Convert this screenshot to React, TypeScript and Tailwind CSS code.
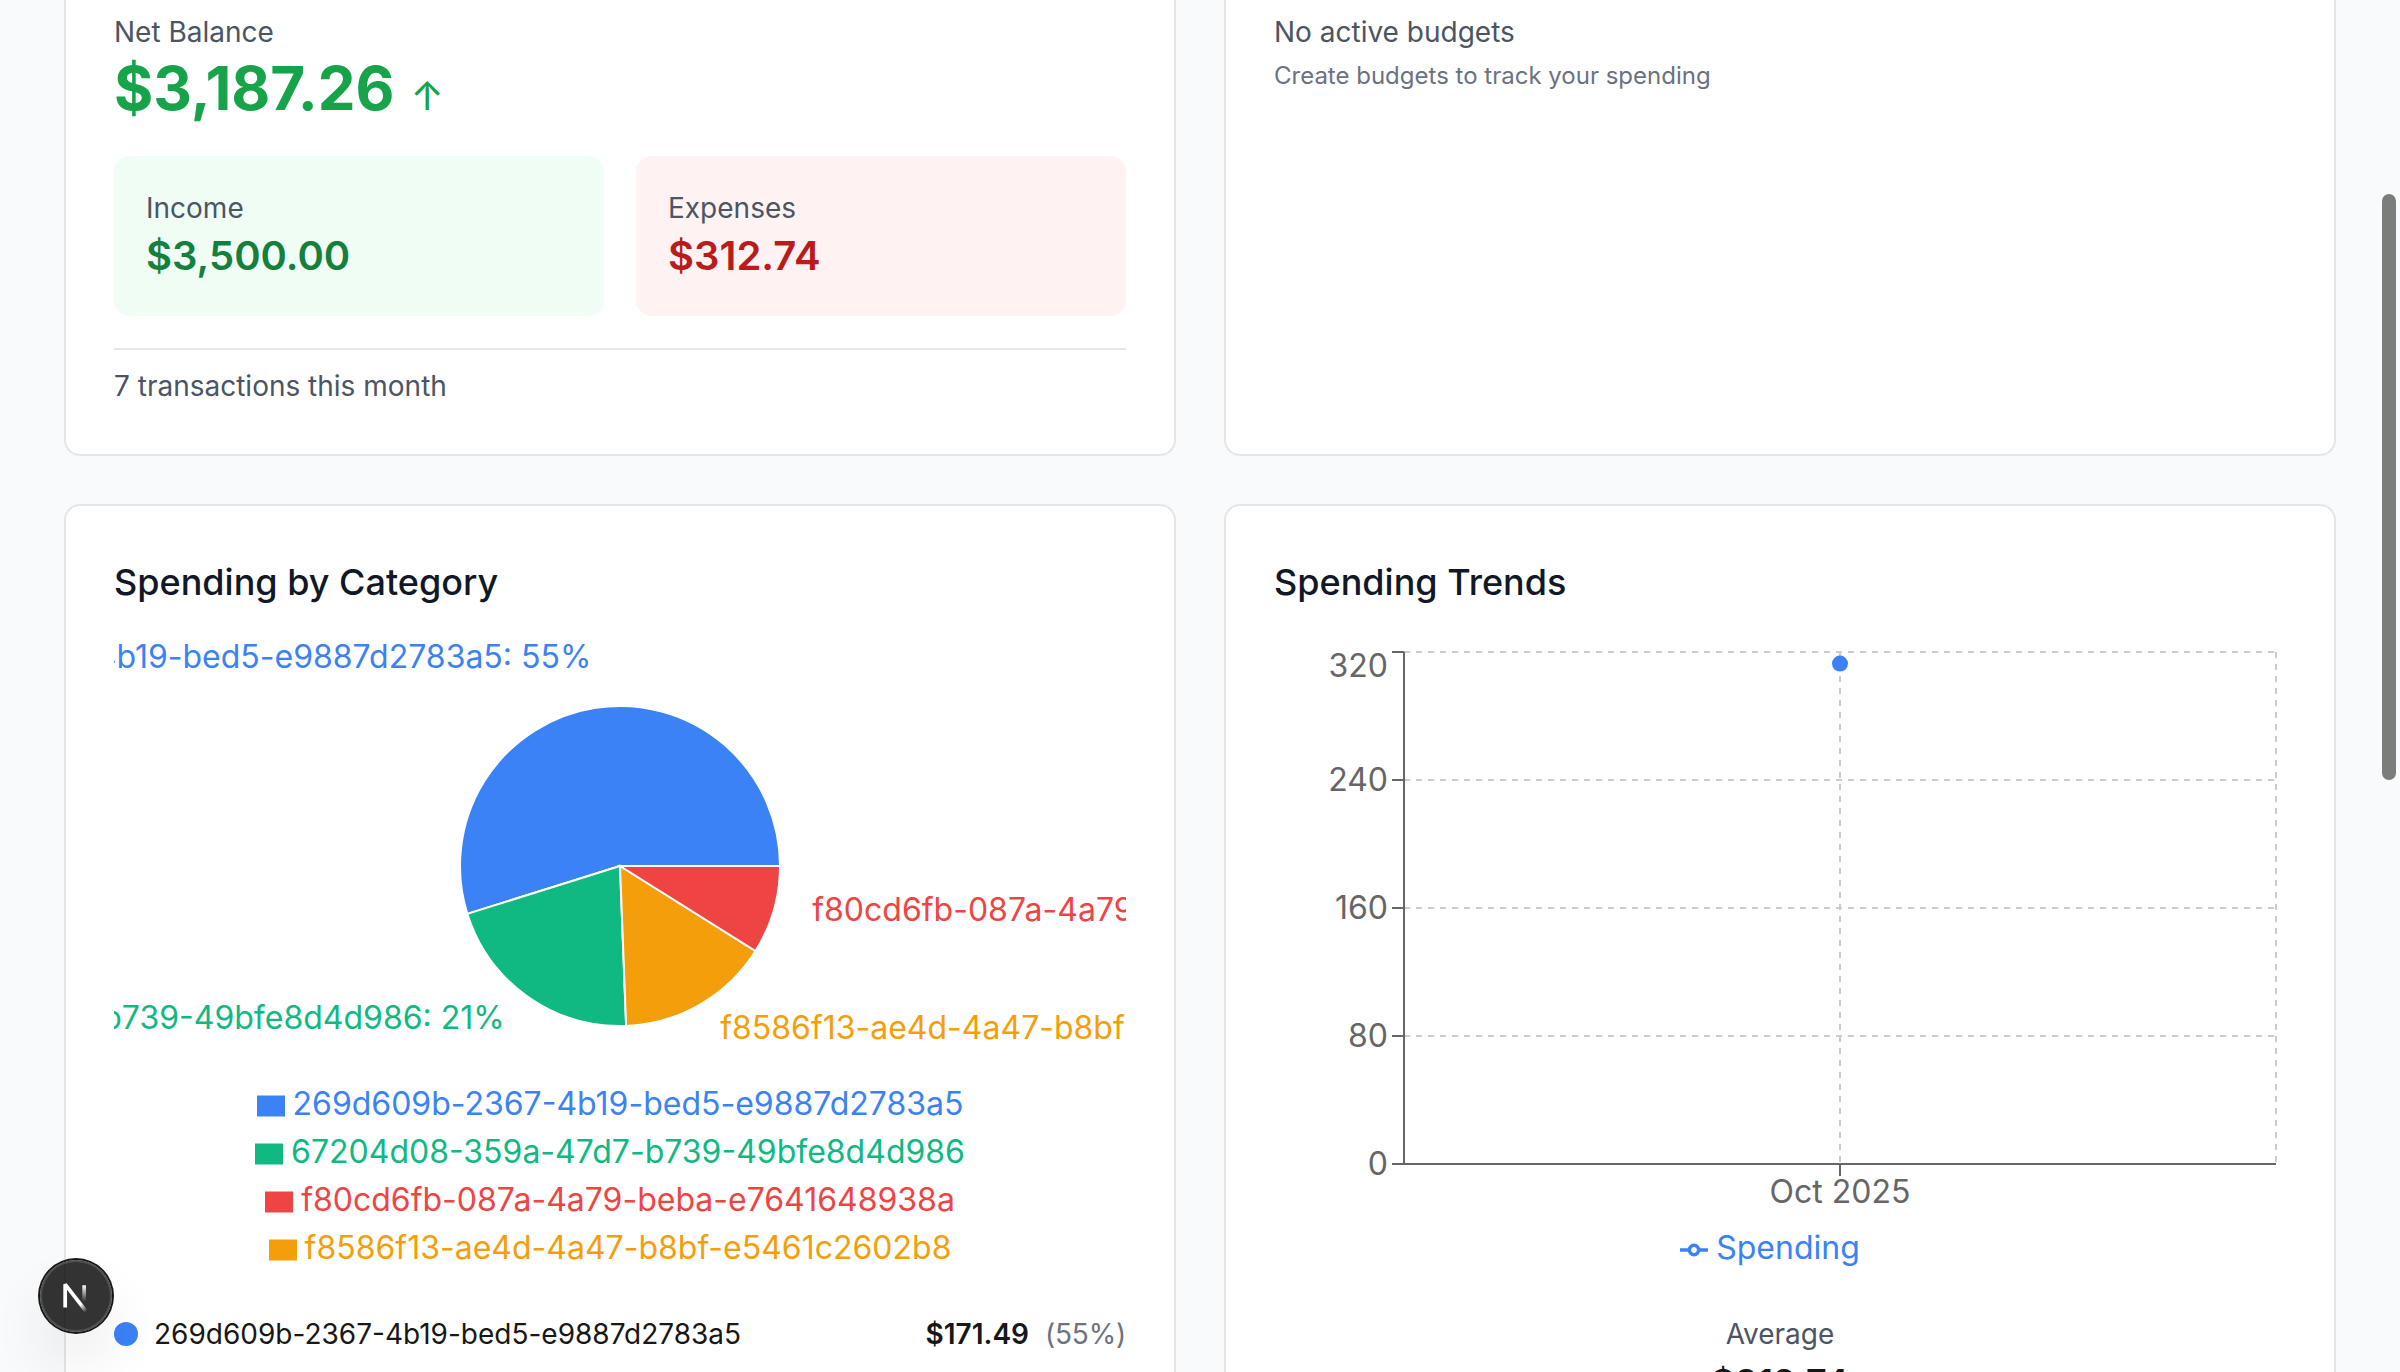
import type { ReactNode } from "react";

type Slice = { id: string; color: string; start: number; end: number; percent: number; dx?: number };

const SLICES: Slice[] = [
  { id: "269d609b-2367-4b19-bed5-e9887d2783a5", color: "#3b82f6", start: 0, end: 197.4, percent: 55, dx: 1.6 },
  { id: "67204d08-359a-47d7-b739-49bfe8d4d986", color: "#10b981", start: 197.4, end: 272.2, percent: 21 },
  { id: "f8586f13-ae4d-4a47-b8bf-e5461c2602b8", color: "#f59e0b", start: 272.2, end: 327.9, percent: 15 },
  { id: "f80cd6fb-087a-4a79-beba-e7641648938a", color: "#ef4444", start: 327.9, end: 360, percent: 9 },
];

const LEGEND = [SLICES[0], SLICES[1], SLICES[3], SLICES[2]];

const CX = 506;
const CY = 224;
const R = 160;

function polar(radius: number, angle: number) {
  const a = (-angle * Math.PI) / 180;
  return { x: CX + radius * Math.cos(a), y: CY + radius * Math.sin(a) };
}

function slicePath({ start, end }: Slice) {
  const a = polar(R, start);
  const b = polar(R, end);
  const large = end - start > 180 ? 1 : 0;
  return `M${CX},${CY} L${a.x},${a.y} A${R},${R} 0 ${large} 0 ${b.x},${b.y} Z`;
}

function PieChart() {
  return (
    <svg className="block h-[438px] w-full overflow-hidden" viewBox="0 0 1012 438">
      {SLICES.map((s) => (
        <path key={s.id} d={slicePath(s)} fill={s.color} stroke="#fff" strokeWidth={2} />
      ))}
      {SLICES.map((s) => {
        const p = polar(R + 40, (s.start + s.end) / 2);
        return (
          <text
            key={s.id}
            x={p.x + (s.dx ?? 0)}
            y={p.y}
            fontSize={32}
            fill={s.color}
            textAnchor={p.x > CX ? "start" : "end"}
          >
            {`${s.id}: ${s.percent}%`}
          </text>
        );
      })}
    </svg>
  );
}

const TICKS = [
  { label: "320", y: 10, textY: 34.6 },
  { label: "240", y: 138, textY: 149.4 },
  { label: "160", y: 266, textY: 277.4 },
  { label: "80", y: 394, textY: 405.4 },
  { label: "0", y: 522, textY: 533.4 },
];

function TrendChart() {
  return (
    <svg className="block h-[582px] w-full overflow-hidden" viewBox="0 0 1012 582">
      <g stroke="#ccc" strokeWidth={2} strokeDasharray="6 6">
        {TICKS.map((t) => (
          <line key={t.label} x1={130} x2={1002} y1={t.y} y2={t.y} />
        ))}
        {[130, 566, 1002].map((x) => (
          <line key={x} x1={x} x2={x} y1={10} y2={522} />
        ))}
      </g>
      <g stroke="#666" strokeWidth={2}>
        <line x1={130} x2={130} y1={10} y2={522} />
        <line x1={130} x2={1002} y1={522} y2={522} />
        <line x1={566} x2={566} y1={522} y2={534} />
        {TICKS.map((t) => (
          <line key={t.label} x1={118} x2={130} y1={t.y} y2={t.y} />
        ))}
      </g>
      <g fill="#666" fontSize={32}>
        {TICKS.map((t) => (
          <text key={t.label} x={114} y={t.textY} textAnchor="end">
            {t.label}
          </text>
        ))}
        <text x={566} y={560.7} textAnchor="middle">
          Oct 2025
        </text>
      </g>
      <circle cx={566} cy={21.6} r={8} fill="#3b82f6" />
    </svg>
  );
}

function Card({ className, children }: { className: string; children: ReactNode }) {
  return <section className={`border-2 border-[#e5e5e5] bg-white px-12 ${className}`}>{children}</section>;
}

function DevBadge() {
  return (
    <div className="absolute top-[1260px] left-10 size-18 rounded-full bg-black/80 shadow-[0_0_0_2px_#171717,inset_0_0_0_2px_rgba(255,255,255,0.14),0_32px_64px_-16px_rgba(0,0,0,0.24)]">
      <svg className="absolute inset-0 size-18" viewBox="0 0 72 72" fill="none">
        <defs>
          <linearGradient id="diag" x1="9.95" y1="11.13" x2="15.33" y2="16.4" gradientUnits="userSpaceOnUse">
            <stop stopColor="#fff" />
            <stop offset="0.604" stopColor="#fff" stopOpacity="0" />
            <stop offset="1" stopColor="#fff" stopOpacity="0" />
          </linearGradient>
          <linearGradient id="stem" x1="11.82" y1="1.4" x2="11.79" y2="9.63" gradientUnits="userSpaceOnUse">
            <stop stopColor="#fff" />
            <stop offset="1" stopColor="#fff" stopOpacity="0" />
          </linearGradient>
        </defs>
        <g transform="translate(20.5 22.3) scale(2)" strokeWidth={1.86}>
          <path d="M13.3 15.2L2.34 1V12.6" stroke="url(#diag)" strokeLinejoin="bevel" />
          <path d="M11.825 1.5V13.1" stroke="url(#stem)" />
        </g>
      </svg>
    </div>
  );
}

export default function App() {
  return (
    <div className="relative h-[1372px] w-[2400px] overflow-hidden bg-[#f9fafb] px-16 font-['Inter',sans-serif] text-[28px] leading-10 text-[#171717] antialiased">
      <div className="grid grid-cols-2 gap-12">
        <Card className="h-[456px] rounded-b-2xl border-t-0 pt-3">
          <p className="text-[#4b5563]">Net Balance</p>
          <p className="flex items-baseline text-[60px] leading-[72px] font-bold text-[#16a34a]">
            $3,187.26
            <span className="ml-4 text-[40px] leading-[56px] font-normal">↑</span>
          </p>
          <div className="mt-8 grid grid-cols-2 gap-8">
            <div className="rounded-2xl bg-[#f0fdf4] p-8">
              <p className="text-[#4b5563]">Income</p>
              <p className="text-[40px] leading-14 font-semibold text-[#15803d]">$3,500.00</p>
            </div>
            <div className="rounded-2xl bg-[#fef2f2] p-8">
              <p className="text-[#4b5563]">Expenses</p>
              <p className="text-[40px] leading-14 font-semibold text-[#b91c1c]">$312.74</p>
            </div>
          </div>
          <p className="mt-8 border-t-2 border-[#e5e7eb] pt-4 text-[#4b5563]">7 transactions this month</p>
        </Card>

        <Card className="h-[456px] rounded-b-2xl border-t-0 pt-3">
          <p className="text-[#4b5563]">No active budgets</p>
          <p className="mt-2 text-2xl leading-8 text-[#6b7280]">Create budgets to track your spending</p>
        </Card>

        <Card className="h-[960px] rounded-2xl pt-12">
          <h3 className="mb-8 text-4xl leading-14 font-medium text-[#111827]">Spending by Category</h3>
          <PieChart />
          <ul className="text-center text-[32px] leading-12">
            {LEGEND.map((s) => (
              <li key={s.id} className="flex h-12 items-center justify-center pr-5" style={{ color: s.color }}>
                <svg className="mt-1 mr-2 size-7" viewBox="0 0 32 32">
                  <path d="M0,4h32v24h-32z" fill={s.color} />
                </svg>
                {s.id}
              </li>
            ))}
          </ul>
          <div className="mt-[42px] flex items-center justify-between">
            <div className="flex items-center gap-4">
              <span className="size-6 rounded-full bg-[#3b82f6]" />
              <span>{SLICES[0].id}</span>
            </div>
            <div className="flex items-center gap-4">
              <span className="font-semibold">$171.49</span>
              <span className="tracking-[-0.2px] text-[#6b7280]">(55%)</span>
            </div>
          </div>
        </Card>

        <Card className="h-[960px] rounded-2xl pt-12">
          <h3 className="mb-8 text-4xl leading-14 font-medium text-[#111827]">Spending Trends</h3>
          <TrendChart />
          <div className="flex h-12 items-center justify-center pr-5 text-[32px] leading-12 text-[#3b82f6]">
            <svg className="mt-1 mr-2 size-7" viewBox="0 0 32 32" fill="none" stroke="#3b82f6" strokeWidth={4}>
              <path d="M0,16h10.67A5.33,5.33,0,1,1,21.33,16H32M21.33,16A5.33,5.33,0,1,1,10.67,16" />
            </svg>
            Spending
          </div>
          <div className="mt-[42px] text-center">
            <p className="text-[#4b5563]">Average</p>
            <p className="text-4xl leading-14 font-semibold">$312.74</p>
          </div>
        </Card>
      </div>

      <DevBadge />
      <div className="absolute top-[194px] right-1 h-[586px] w-[14px] rounded-full bg-[#7b7d7b]" />
    </div>
  );
}
